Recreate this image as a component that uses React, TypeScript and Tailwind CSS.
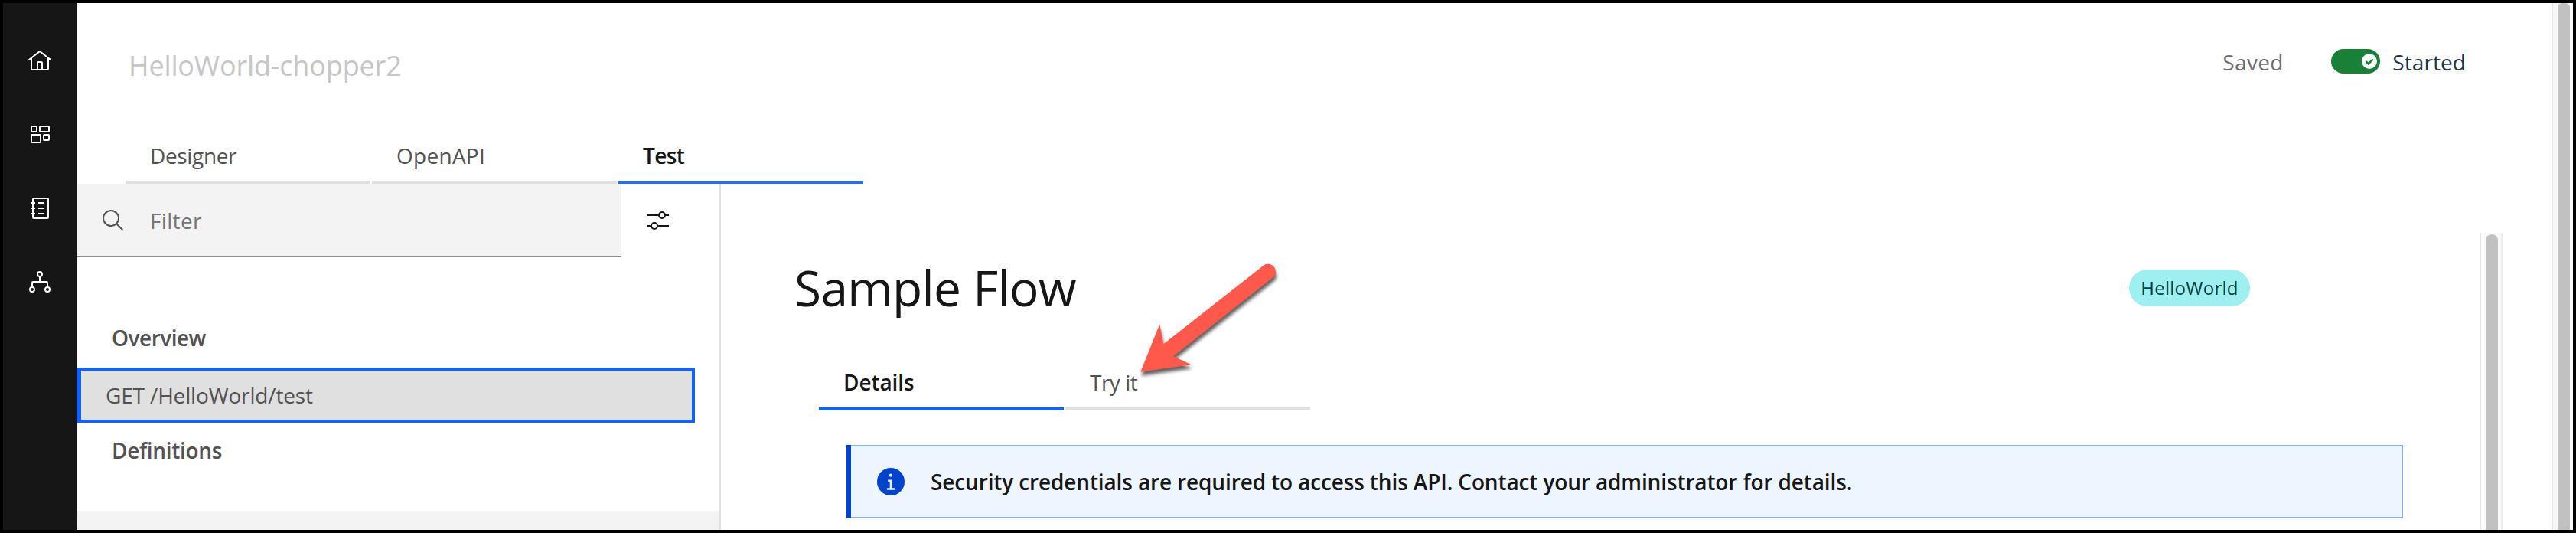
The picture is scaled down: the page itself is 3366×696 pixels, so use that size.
import type { ReactNode } from "react";

function NavIcon({ children }: { children: ReactNode }) {
  return (
    <a className="flex h-24 w-24 items-center justify-center">
      <svg viewBox="0 0 32 32" className="h-8 w-8 fill-none stroke-white stroke-2">
        {children}
      </svg>
    </a>
  );
}

function Sidebar() {
  return (
    <nav className="flex w-24 shrink-0 flex-col bg-[#161616] pt-7">
      <NavIcon>
        <path
          className="fill-white stroke-none"
          d="M16.6123,2.2138a1.01,1.01,0,0,0-1.2427,0L1,13.4194l1.2427,1.5717L4,13.621V26a2.0041,2.0041,0,0,0,2,2H26a2.0037,2.0037,0,0,0,2-2V13.63L29.7573,15,31,13.4282ZM18,26H14V18h4Zm2,0V18a2.0023,2.0023,0,0,0-2-2H14a2.002,2.002,0,0,0-2,2v8H6V12.0615l10-7.79,10,7.8005V26Z"
        />
      </NavIcon>
      <NavIcon>
        <rect x="5" y="5" width="7" height="7" rx="0.8" />
        <rect x="16" y="5" width="12" height="7" rx="0.8" />
        <rect x="5" y="16" width="12" height="10" rx="0.8" />
        <rect x="21" y="16" width="7" height="7" rx="0.8" />
      </NavIcon>
      <NavIcon>
        <rect x="7" y="3" width="20" height="26" rx="0.8" />
        <path d="M4 9h6M4 16h6M4 23h6M14 9h8M14 16h8M14 23h8" />
      </NavIcon>
      <NavIcon>
        <circle cx="16" cy="6" r="3" />
        <circle cx="6" cy="26" r="3" />
        <circle cx="26" cy="26" r="3" />
        <path d="M16 9v7M6 23v-6a1 1 0 0 1 1-1h18a1 1 0 0 1 1 1v6" />
      </NavIcon>
    </nav>
  );
}

function Header() {
  return (
    <header className="flex h-[162px] shrink-0 items-start pt-14 pr-28 pl-[68px] text-[28px] leading-10">
      <h1 className="flex-1 pt-0.5 text-[36px] leading-[48px] tracking-[-0.15px] text-[#c6c6c6]">HelloWorld-chopper2</h1>
      <span className="w-[142px] pt-px tracking-[0.35px] text-[#6f6f6f]">Saved</span>
      <span className="mt-1 flex h-8 w-16 items-center justify-end rounded-full bg-[#198038] pr-1">
        <svg viewBox="0 0 20 20" className="h-5 w-5">
          <circle cx="10" cy="10" r="10" fill="#fff" />
          <path d="M5.5 10.2l3.2 3.2 6-6" fill="none" stroke="#198038" strokeWidth="2.7" />
        </svg>
      </span>
      <span className="ml-4 pt-px tracking-[0.08px] text-[#1d3649]">Started</span>
    </header>
  );
}

function Tab({ className, children }: { className: string; children: ReactNode }) {
  return <div className={"flex h-[74px] w-80 items-start border-b-4 pt-[17px] pl-8 " + className}>{children}</div>;
}

function FilterPanel() {
  return (
    <aside className="flex w-[842px] shrink-0 flex-col border-r-2 border-[#e0e0e0] text-[28px] leading-10 text-[#525252]">
      <div className="flex h-24">
        <div className="flex w-[712px] items-center border-b-2 border-[#8d8d8d] bg-[#f3f3f3] pt-0.5 pl-8">
          <svg viewBox="0 0 32 32" className="h-8 w-8 fill-[#525252]">
            <path d="M29,27.5859l-7.5521-7.5521a11.0177,11.0177,0,1,0-1.4141,1.4141L27.5859,29ZM4,13a9,9,0,1,1,9,9A9.01,9.01,0,0,1,4,13Z" />
          </svg>
          <span className="ml-8 tracking-[0.34px] text-[#757575]">Filter</span>
        </div>
        <div className="flex items-center pl-8">
          <svg viewBox="0 0 32 32" className="h-8 w-8 fill-none stroke-[#161616] stroke-2">
            <circle cx="21" cy="9" r="4" />
            <circle cx="11" cy="23" r="4" />
            <path d="M2 9h15M25 9h5M2 23h5M15 23h15" />
          </svg>
        </div>
      </div>
      <div className="mt-[85px] pl-[46px] font-semibold tracking-[-0.5px]">Overview</div>
      <div className="mt-[19px] flex h-[72px] w-[808px] items-center border-4 border-l-[6px] border-[#0f62fe] bg-[#e0e0e0] pl-8 tracking-[-0.15px]">
        GET /HelloWorld/test
      </div>
      <div className="mt-4 flex-1 pl-[46px] font-semibold tracking-[-0.33px]">Definitions</div>
      <div className="h-[25px] bg-[#f3f3f3]" />
    </aside>
  );
}

function Arrow() {
  return (
    <svg viewBox="0 0 200 170" className="absolute top-[90px] left-[538px] h-[170px] w-[200px] overflow-visible">
      <path
        d="M10.3 155.7 35.3 93.3 40.3 119.3 171.5 16.2A10.2 10.2 0 0 1 184.5 31.6L53.3 135.3 76.8 146.2Z"
        fill="#ff594c"
        className="drop-shadow-[1px_5px_2px_rgba(0,0,0,0.62)]"
      />
    </svg>
  );
}

function ApiDetails() {
  return (
    <section className="relative flex min-w-0 flex-1 flex-col pt-24 pl-24 text-[28px] leading-10">
      <div className="flex h-20 items-start justify-between pr-[300px]">
        <h2 className="text-[64px] leading-[80px] tracking-[-0.65px] text-[#161616]">Sample Flow</h2>
        <span className="mt-4 flex h-12 w-[158px] items-center justify-center rounded-full bg-[#9ef0f0] text-[24px] tracking-[0.25px] text-[#004144]">
          HelloWorld
        </span>
      </div>
      <div className="mt-[46px] ml-8 flex gap-0.5">
        <Tab className="border-[#0f62fe] font-semibold tracking-[-0.1px] text-[#161616]">Details</Tab>
        <Tab className="border-[#e0e0e0] tracking-[-0.5px] text-[#525252]">Try it</Tab>
      </div>
      <div className="mt-[45px] mr-[100px] ml-[68px] flex h-24 shrink-0 bg-[#0043ce] pl-1.5">
        <div className="flex flex-1 items-center border-2 border-l-0 border-[#8fafeb] bg-[#edf5ff] pl-[34px] font-semibold tracking-[-0.135px] text-[#161616]">
          <svg viewBox="0 0 36 36" className="h-9 w-9">
            <circle cx="18" cy="18" r="18" fill="#0043ce" />
            <circle cx="18" cy="9.7" r="2.1" fill="#edf5ff" />
            <path d="M14.2 15.6h5.2v10.6h3.7v2.6h-10.2v-2.6h3.8v-8h-2.5z" fill="#edf5ff" />
          </svg>
          <span className="ml-[34px]">Security credentials are required to access this API. Contact your administrator for details.</span>
        </div>
      </div>
      <Arrow />
    </section>
  );
}

export default function App() {
  return (
    <div className="flex h-[696px] w-[3366px] overflow-hidden border-4 border-black bg-white font-['Open_Sans',sans-serif]">
      <Sidebar />
      <main className="flex min-w-0 flex-1 flex-col">
        <Header />
        <div className="flex shrink-0 gap-0.5 pl-16 text-[28px] leading-10">
          <Tab className="border-[#e0e0e0] tracking-[-0.35px] text-[#525252]">Designer</Tab>
          <Tab className="border-[#e0e0e0] tracking-[0.27px] text-[#525252]">OpenAPI</Tab>
          <Tab className="border-[#276ee6] font-semibold tracking-[-0.6px] text-[#161616]">Test</Tab>
        </div>
        <div className="flex min-h-0 flex-1">
          <FilterPanel />
          <ApiDetails />
          <div className="mt-16 mr-16 flex w-[30px] shrink-0 border-x-2 border-l-[#e7e7e7] border-r-[#ededed] bg-[#fafafa] pt-0.5 pl-1.5">
            <div className="w-4 rounded-t-lg bg-[#c1c1c1]" />
          </div>
        </div>
      </main>
      <div className="flex w-7 shrink-0 border-l-2 border-[#e7e7e7] bg-[#f8f8f8] pl-1.5">
        <div className="w-4 rounded-t-md bg-[#c1c1c1]" />
      </div>
    </div>
  );
}
